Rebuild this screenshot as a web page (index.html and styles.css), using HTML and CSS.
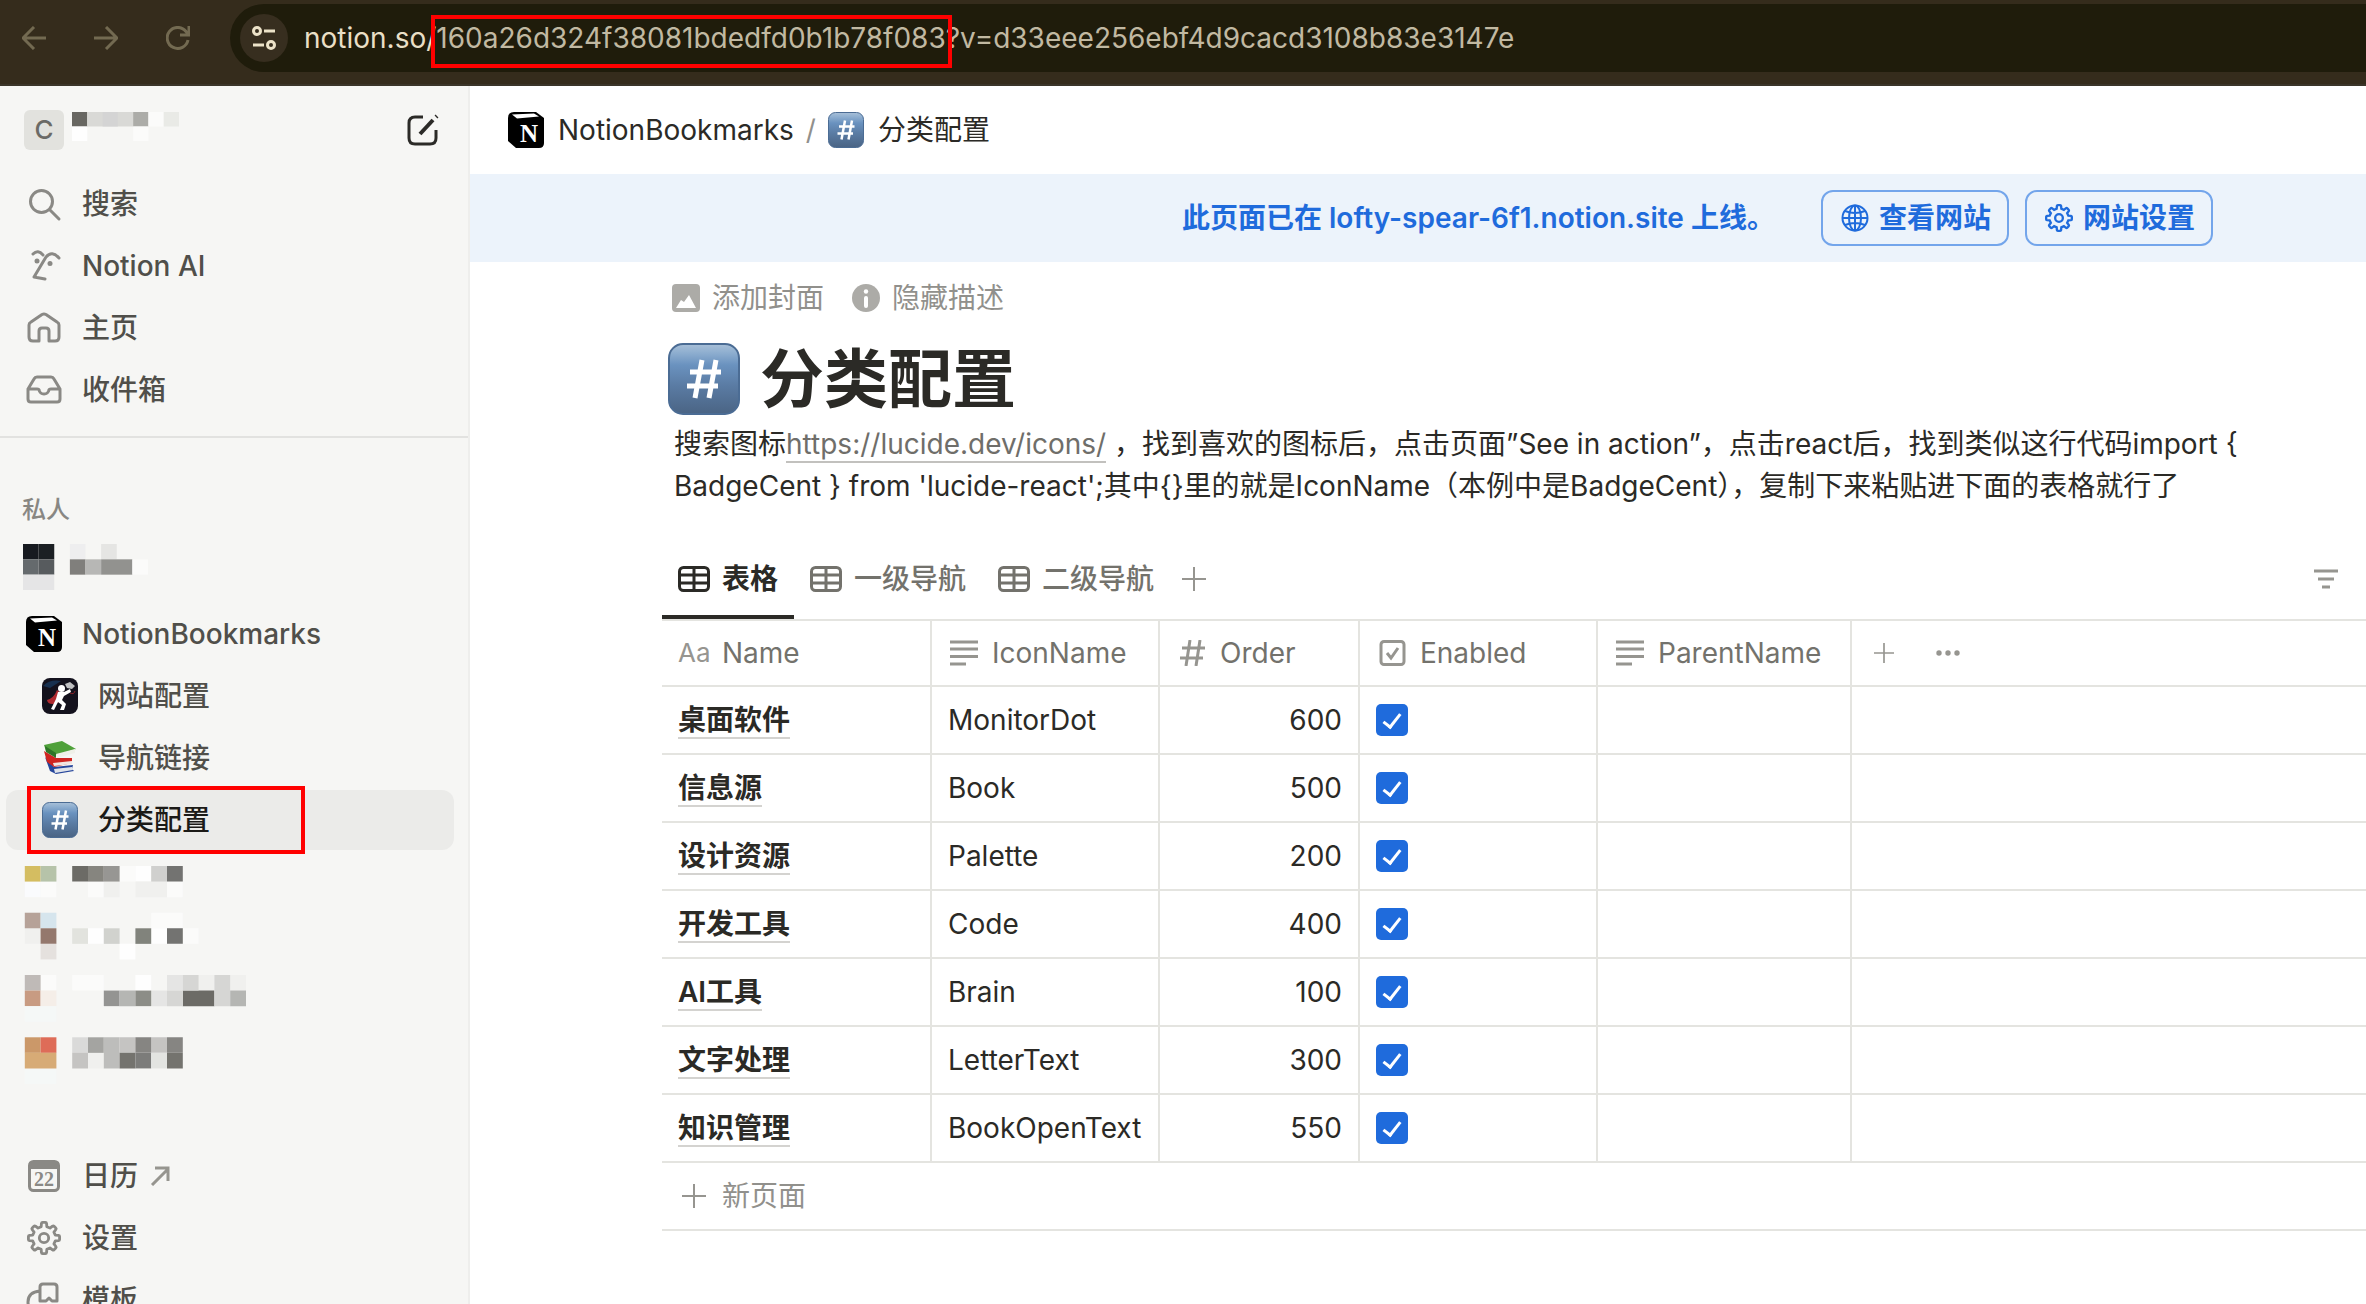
FILE: index.html
```html
<!DOCTYPE html>
<html lang="zh-CN">
<head>
<meta charset="utf-8">
<title>分类配置</title>
<link rel="stylesheet" href="styles.css">
</head>
<body>
<svg class="sprite" aria-hidden="true">
  <defs>
    <linearGradient id="keycap-fill" x1="0" y1="0" x2="0" y2="1">
      <stop offset="0" stop-color="#a9c0d8"/>
      <stop offset=".12" stop-color="#8fafd0"/>
      <stop offset=".3" stop-color="#6a92bf"/>
      <stop offset=".6" stop-color="#5a7ba3"/>
      <stop offset="1" stop-color="#4a6484"/>
    </linearGradient>
  </defs>
  <symbol id="i-gear" viewBox="-12 -12 24 24">
    <path d="M-2-8L-1.8-10.3Q-1.7-11-1-11H1Q1.7-11 1.8-10.3L2-8 4.2-7 6-8.4Q6.6-8.8 7.1-8.3L8.3-7.1Q8.8-6.6 8.4-6L7-4.2 8-2 10.3-1.8Q11-1.7 11-1V1Q11 1.7 10.3 1.8L8 2 7 4.2 8.4 6Q8.8 6.6 8.3 7.1L7.1 8.3Q6.6 8.8 6 8.4L4.2 7 2 8 1.8 10.3Q1.7 11 1 11H-1Q-1.7 11-1.8 10.3L-2 8-4.2 7-6 8.4Q-6.6 8.8-7.1 8.3L-8.3 7.1Q-8.8 6.6-8.4 6L-7 4.2-8 2-10.3 1.8Q-11 1.7-11 1V-1Q-11-1.7-10.3-1.8L-8-2-7-4.2-8.4-6Q-8.8-6.6-8.3-7.1L-7.1-8.3Q-6.6-8.8-6-8.4L-4.2-7Z"/>
    <circle r="3.3"/>
  </symbol>
  <symbol id="i-table" viewBox="0 0 32 26">
    <rect x="1.5" y="1.5" width="29" height="23" rx="4"/>
    <path d="M1.5 9H30.5M1.5 17H30.5M16 1.5V24.5"/>
  </symbol>
  <symbol id="i-text" viewBox="0 0 32 26">
    <path d="M2 2H30M2 9H30M2 16.500H30M2 24H18"/>
  </symbol>
  <symbol id="i-plus" viewBox="0 0 24 24"><path d="M12 0V24M0 12H24"/></symbol>
  <symbol id="i-keycap" viewBox="0 0 72 72">
    <rect x="1" y="1" width="70" height="70" rx="14" fill="url(#keycap-fill)" stroke="#4b6c94" stroke-width="2"/>
    <path d="M34 17L27 55M48 17L41 55M22 29H53M19 43H50" fill="none" stroke="#fff" stroke-width="5"/>
  </symbol>
  <symbol id="i-notion" viewBox="0 0 36 36">
    <path d="M6 0H28L36 6V31Q36 36 31 36H8L0 29V6Q0 0 6 0Z" fill="#000"/>
    <path d="M4 2.500L26 1.500 31 4.500 9 6.500Z" fill="#fff"/>
    <text x="21" y="30" text-anchor="middle" font-family="Liberation Serif, serif" font-weight="700" font-size="25" fill="#fff">N</text>
  </symbol>
</svg>

<div class="app">
  <header class="toolbar">
    <nav class="toolbar-nav" aria-label="浏览器导航">
      <button class="tool" aria-label="后退"><svg width="24" height="24" viewBox="0 0 24 24"><path d="M24 12H2M12 1L1 12 12 23"/></svg></button>
      <button class="tool" aria-label="前进"><svg width="24" height="24" viewBox="0 0 24 24"><path d="M0 12H22M12 1L23 12 12 23"/></svg></button>
      <button class="tool" aria-label="重新加载"><svg width="24" height="24" viewBox="0 0 24 24"><path d="M22 14A10.500 10.500 0 1 1 20 5.500L23 9M23 0V9H14"/></svg></button>
    </nav>
    <div class="address">
      <button class="site-info" aria-label="网站信息"><svg width="24" height="24" viewBox="0 0 24 24"><circle cx="5" cy="5" r="3.500"/><path d="M12 5H23M1 19H12"/><circle cx="19" cy="19" r="3.500"/></svg></button>
      <div class="url"><span class="host">notion.so/</span><span class="page-id">160a26d324f38081bdedfd0b1b78f083</span><span>?v=d33eee256ebf4d9cacd3108b83e3147e</span></div>
    </div>
  </header>

  <div class="workspace">
    <aside class="sidebar">
      <div class="account">
        <span class="avatar">C</span>
        <svg class="mosaic-name" viewBox="0 0 7 2" preserveAspectRatio="none" aria-hidden="true">
          <path fill="#686762" d="M0 0h1v1H0z"/><path fill="#d9d9d6" d="M1 0h3v1H1z"/><path fill="#d4d4d4" d="M2 0h1v1H2z"/><path fill="#acaca8" d="M4 0h1v1H4z"/><path fill="#fbfbfa" d="M5 0h1v1H5zM4 1h1v1H4z"/><path fill="#e9eae6" d="M6 0h1v1H6z"/><path fill="#fefefe" d="M0 1h1v1H0z"/>
        </svg>
        <button class="compose" aria-label="新建页面"><svg width="34" height="34" viewBox="0 0 34 34"><path d="M17 4H9Q3 4 3 10V25Q3 31 9 31H24Q30 31 30 25V17"/><path d="M14 21L27 7" stroke-width="4"/><path d="M30 4L31 3" stroke-width="4"/></svg></button>
      </div>

      <nav class="menu" aria-label="主菜单">
        <a class="item" href="#"><svg class="icon" viewBox="0 0 36 36"><circle cx="15.500" cy="15.500" r="11"/><path d="M24 24L33 33"/></svg>搜索</a>
        <a class="item" href="#"><svg class="icon" viewBox="0 0 36 36"><path d="M7 6Q12 1 17 7M10 29H8L20 9Q26 2 33 10M8 29L19 31"/><circle class="dot" cx="11" cy="13" r="2.500"/><circle class="dot" cx="24" cy="15.500" r="2.500"/></svg>Notion AI</a>
        <a class="item" href="#"><svg class="icon" viewBox="0 0 36 36"><path d="M3 15Q3 13 5 12L16 4.500Q18 3.500 20 4.500L31 12Q33 13 33 15V27Q33 31 29 31H23V21Q23 18 20 18H16Q13 18 13 21V31H7Q3 31 3 27Z"/></svg>主页</a>
        <a class="item" href="#"><svg class="icon" viewBox="0 0 36 36"><path d="M2 17L8 7Q9 5 11 5H25Q27 5 28 7L34 17V27Q34 30 31 30H5Q2 30 2 27ZM2 17H11Q13 17 13 18 14 22 18 22T23 18Q23 17 25 17H34"/></svg>收件箱</a>
      </nav>

      <h2 class="section-label">私人</h2>
      <div class="hidden-page">
        <svg class="mosaic-page" viewBox="0 0 8 3" preserveAspectRatio="none" aria-hidden="true">
          <path fill="#171a20" d="M0 0h1v1H0z"/><path fill="#1b1f23" d="M1 0h1v1H1z"/><path fill="#656a6d" d="M0 1h1v1H0z"/><path fill="#575b5e" d="M1 1h1v1H1z"/><path fill="#e5e5e6" d="M0 2h2v1H0z"/>
          <path fill="#eeeeef" d="M3 0h1v1H3z"/><path fill="#e5e5e3" d="M5 0h1v1H5z"/><path fill="#807f7c" d="M3 1h1v1H3z"/><path fill="#b7b7b5" d="M4 1h1v1H4z"/><path fill="#92928f" d="M5 1h2v1H5z"/><path fill="#fbfbfa" d="M7 1h1v1H7z"/>
        </svg>
      </div>
      <nav class="menu" aria-label="私人页面">
        <a class="item" href="#"><svg class="icon" viewBox="0 0 36 36"><use href="#i-notion"/></svg>NotionBookmarks</a>
        <a class="item child" href="#"><svg class="picture" viewBox="0 0 36 36"><rect width="36" height="36" rx="8" fill="#14121d"/><path d="M1 8Q8 1 19 3L8 10Z" fill="#17304f"/><path d="M15 12Q12 20 5 22 6 28 16 25L19 15Z" fill="#b02a30"/><circle cx="19.500" cy="10.500" r="3.500" fill="#fff"/><path d="M16 14L22 14 28 11 29 14 22 18 20 22 24 26 22 32H18L20 27 16 24 12 32 9 31 14 21Z" fill="#fff"/><path d="M23 6L28 4 33 8 30 11 25 10Z" fill="#bfc0c2"/><path d="M28 15Q32 17 33 13" stroke="#8c2028" fill="none"/></svg>网站配置</a>
        <a class="item child" href="#"><svg class="picture" viewBox="0 0 36 36"><path d="M3 17L12 27 31 25 30 29 32 31 14 34 8 31Z" fill="#26469b"/><path d="M12 29L30 27 31 30 13 33Z" fill="#dfe3ea"/><path d="M2 11L14 18 30 18 30 23 12 27 5 22Z" fill="#cf2420"/><path d="M11 23L30 21 30 24 12 26Z" fill="#f1e5e1"/><path d="M2 5L20 1 34 9 15 15 4 11Z" fill="#4fa13a"/><path d="M14 14L33 9V13L15 18Z" fill="#eff0e8"/><path d="M3 6L14 13V18L4 12Z" fill="#2d7427"/></svg>导航链接</a>
        <a class="item child active" href="#" aria-current="page"><svg class="picture" viewBox="0 0 72 72"><use href="#i-keycap"/></svg>分类配置</a>
      </nav>
      <div class="hidden-pages">
        <svg class="mosaic-list" viewBox="0 0 15 14" preserveAspectRatio="none" aria-hidden="true">
          <path fill="#fbfbfa" d="M2 1h1v1H2zM7 0h1v1H7zM5 1h1v1H5zM10 1h1v1h-1zM9 3h2v1H9zM11 4h1v1h-1zM2 7h1v1H2zM4 7h2v1H4z"/>
          <path fill="#fefefe" d="M8 0h1v1H8zM5 4h1v1H5zM9 4h1v1H9zM7 5h1v1H7zM8 7h1v1H8z"/>
          <path fill="#fafbfd" d="M1 1h1v1H1z"/>
          <path fill="#f0f0ee" d="M6 1h1v1H6zM8 1h2v1H8zM1 4h1v1H1zM12 7h1v1h-1zM14 7h1v1h-1zM5 12h1v1H5z"/>
          <path fill="#d4bd61" d="M1 0h1v1H1z"/><path fill="#b6c3a9" d="M2 0h1v1H2z"/>
          <path fill="#6c6b66" d="M4 0h1v1H4zM11 8h2v1h-2z"/><path fill="#86857f" d="M5 0h1v1H5z"/><path fill="#979693" d="M6 0h1v1H6z"/><path fill="#d0d0ce" d="M9 0h1v1H9z"/><path fill="#737371" d="M10 0h1v1h-1zM10 4h1v1h-1z"/>
          <path fill="#b6a298" d="M1 3h1v1H1z"/><path fill="#d6e5ed" d="M2 3h1v1H2z"/><path fill="#94786d" d="M2 4h1v1H2z"/><path fill="#e5e1de" d="M2 5h1v1H2z"/>
          <path fill="#e2e3de" d="M4 4h1v1H4z"/><path fill="#d1d2ce" d="M6 4h1v1H6z"/><path fill="#81837c" d="M8 4h1v1H8z"/>
          <path fill="#bfbab7" d="M1 7h1v1H1z"/><path fill="#c89b82" d="M1 8h1v1H1z"/><path fill="#f5eee8" d="M2 8h1v1H2z"/><path fill="#f5f8f7" d="M1 9h2v1H1zM1 13h2v1H1z"/>
          <path fill="#e5e5e4" d="M10 7h1v1h-1zM9 8h1v1H9z"/><path fill="#d6d6d4" d="M11 7h1v1h-1zM13 7h1v1h-1zM10 8h1v1h-1zM13 8h1v1h-1z"/>
          <path fill="#949492" d="M6 8h1v1H6z"/><path fill="#b5b6b3" d="M7 8h1v1H7zM14 8h1v1h-1z"/><path fill="#8c8d87" d="M8 8h1v1H8z"/>
          <path fill="#cb9869" d="M1 11h1v1H1z"/><path fill="#de6c58" d="M2 11h1v1H2z"/><path fill="#d7ab76" d="M1 12h2v1H1z"/>
          <path fill="#dadad9" d="M4 11h1v1H4z"/><path fill="#a4a4a1" d="M5 11h1v1H5z"/><path fill="#bdbdbb" d="M6 11h1v1H6zM6 12h1v1H6z"/><path fill="#c5c4c2" d="M7 11h1v1H7zM9 11h1v1H9zM4 12h1v1H4z"/><path fill="#868582" d="M8 11h1v1H8zM10 11h1v1h-1z"/><path fill="#74736e" d="M7 12h1v1H7zM10 12h1v1h-1z"/><path fill="#7c7c7a" d="M8 12h1v1H8z"/><path fill="#e3e4e1" d="M9 12h1v1H9z"/>
        </svg>
      </div>
      <nav class="menu" aria-label="工具">
        <a class="item" href="#"><svg class="icon" viewBox="0 0 36 36"><rect x="3.500" y="3.500" width="29" height="29" rx="4"/><path class="dot" d="M3 4H33V11H3Z"/><text class="day" x="18" y="28" text-anchor="middle">22</text></svg>日历<svg class="external" width="20" height="20" viewBox="0 0 20 20"><path d="M2 19L18 3M5 2H18V15"/></svg></a>
        <a class="item" href="#"><svg class="icon gear" viewBox="0 0 36 36"><use href="#i-gear" x="1" y="1" width="34" height="34"/></svg>设置</a>
        <a class="item" href="#"><svg class="icon" viewBox="0 0 36 36"><path d="M17 2H28Q31 2 31 5V19H26L23 16 20 19H14V5Q14 2 17 2ZM14 9Q2 10 2 20T13 31H31"/></svg>模板</a>
      </nav>
    </aside>

    <main class="main">
      <nav class="crumbs" aria-label="路径">
        <a class="crumb" href="#"><svg width="36" height="36"><use href="#i-notion"/></svg>NotionBookmarks</a>
        <span class="slash">/</span>
        <a class="crumb" href="#"><svg width="36" height="36"><use href="#i-keycap"/></svg>分类配置</a>
      </nav>

      <div class="banner">
        <span class="banner-text">此页面已在 lofty-spear-6f1.notion.site 上线。</span>
        <button class="site-button"><svg width="28" height="28" viewBox="0 0 28 28"><circle cx="14" cy="14" r="12.500"/><ellipse cx="14" cy="14" rx="6" ry="12.500"/><path d="M14 1.500V26.500M1.500 14H26.500M4 7Q14 11 24 7M4 21Q14 17 24 21"/></svg>查看网站</button>
        <button class="site-button"><svg width="28" height="28"><use href="#i-gear"/></svg>网站设置</button>
      </div>

      <div class="content">
        <div class="page-actions">
          <button class="page-action"><svg width="28" height="28" viewBox="0 0 28 28"><rect width="28" height="28" rx="4" fill="#acaba7"/><path d="M4 24L9 16 12 18 17 11 24 24Z" fill="#fff"/></svg>添加封面</button>
          <button class="page-action"><svg width="28" height="28" viewBox="0 0 28 28"><circle cx="14" cy="14" r="14" fill="#acaba7"/><circle cx="14" cy="7.500" r="2.200" fill="#fff"/><path d="M14 14V22" stroke="#fff" stroke-width="4" stroke-linecap="round"/></svg>隐藏描述</button>
        </div>
        <div class="title-row">
          <svg width="72" height="72"><use href="#i-keycap"/></svg>
          <h1 class="title">分类配置</h1>
        </div>
        <p class="description">搜索图标<a class="doc-link" href="https://lucide.dev/icons/">https://lucide.dev/icons/</a> ，找到喜欢的图标后，点击页面”See in action”，点击react后，找到类似这行代码import { BadgeCent } from 'lucide-react';其中{}里的就是IconName（本例中是BadgeCent），复制下来粘贴进下面的表格就行了</p>

        <div class="views">
          <button class="view current"><svg width="32" height="26"><use href="#i-table"/></svg>表格</button>
          <button class="view"><svg width="32" height="26"><use href="#i-table"/></svg>一级导航</button>
          <button class="view"><svg width="32" height="26"><use href="#i-table"/></svg>二级导航</button>
          <button class="add-view" aria-label="添加视图"><svg width="24" height="24"><use href="#i-plus"/></svg></button>
          <button class="filter" aria-label="筛选"><svg width="24" height="20" viewBox="0 0 24 20"><path d="M0 2H24M4 10H20M8 18H16"/></svg></button>
        </div>

        <table class="grid">
          <colgroup><col class="c-name"><col class="c-icon"><col class="c-order"><col class="c-enabled"><col class="c-parent"><col></colgroup>
          <thead>
            <tr>
              <th scope="col"><span class="head"><span class="aa">Aa</span>Name</span></th>
              <th scope="col"><span class="head"><svg width="32" height="26"><use href="#i-text"/></svg>IconName</span></th>
              <th scope="col"><span class="head"><svg width="32" height="26" viewBox="0 0 32 26"><path d="M14 0L10 26M24 0L20 26M6 8H29M4 18H27"/></svg>Order</span></th>
              <th scope="col"><span class="head"><svg width="32" height="26" viewBox="0 0 32 26"><rect x="5" y="1.500" width="23" height="23" rx="3"/><path d="M11 13L15 18 22 8"/></svg>Enabled</span></th>
              <th scope="col"><span class="head"><svg width="32" height="26"><use href="#i-text"/></svg>ParentName</span></th>
              <th class="tools"><span class="tool-pair"><button aria-label="添加属性"><svg width="20" height="20"><use href="#i-plus"/></svg></button><button aria-label="更多"><svg width="24" height="6" viewBox="0 0 24 6"><circle class="dot" cx="3" cy="3" r="2.700"/><circle class="dot" cx="12" cy="3" r="2.700"/><circle class="dot" cx="21" cy="3" r="2.700"/></svg></button></span></th>
            </tr>
          </thead>
          <tbody>
            <tr><td><a class="name" href="#">桌面软件</a></td><td>MonitorDot</td><td class="num">600</td><td><input class="check" type="checkbox" checked aria-label="桌面软件 Enabled"></td><td></td><td></td></tr>
            <tr><td><a class="name" href="#">信息源</a></td><td>Book</td><td class="num">500</td><td><input class="check" type="checkbox" checked aria-label="信息源 Enabled"></td><td></td><td></td></tr>
            <tr><td><a class="name" href="#">设计资源</a></td><td>Palette</td><td class="num">200</td><td><input class="check" type="checkbox" checked aria-label="设计资源 Enabled"></td><td></td><td></td></tr>
            <tr><td><a class="name" href="#">开发工具</a></td><td>Code</td><td class="num">400</td><td><input class="check" type="checkbox" checked aria-label="开发工具 Enabled"></td><td></td><td></td></tr>
            <tr><td><a class="name" href="#">AI工具</a></td><td>Brain</td><td class="num">100</td><td><input class="check" type="checkbox" checked aria-label="AI工具 Enabled"></td><td></td><td></td></tr>
            <tr><td><a class="name" href="#">文字处理</a></td><td>LetterText</td><td class="num">300</td><td><input class="check" type="checkbox" checked aria-label="文字处理 Enabled"></td><td></td><td></td></tr>
            <tr><td><a class="name" href="#">知识管理</a></td><td>BookOpenText</td><td class="num">550</td><td><input class="check" type="checkbox" checked aria-label="知识管理 Enabled"></td><td></td><td></td></tr>
          </tbody>
        </table>
        <button class="new-row"><svg width="24" height="24"><use href="#i-plus"/></svg>新页面</button>
      </div>
    </main>
  </div>
</div>
</body>
</html>
```

FILE: styles.css
```css
* { box-sizing: border-box; }

body {
  margin: 0;
  font-family: Inter, "Noto Sans CJK SC", sans-serif;
  font-size: 28px;
  line-height: 42px;
  color: #2b2a26;
  background: #fff;
}

a { color: inherit; text-decoration: none; }

button {
  margin: 0;
  padding: 0;
  border: 0;
  background: none;
  font: inherit;
  color: inherit;
}

svg { display: block; flex: none; }
.sprite { position: absolute; width: 0; height: 0; }

.app {
  display: flex;
  flex-direction: column;
  height: 100vh;
  overflow: hidden;
}

/* browser toolbar */
.toolbar {
  display: flex;
  flex: none;
  height: 86px;
  padding: 4px 0 12px 22px;
  background: #352c1c;
  border-bottom: 2px solid #3b3529;
}

.toolbar-nav {
  display: flex;
  align-items: center;
  gap: 48px;
  width: 208px;
}

.tool svg {
  fill: none;
  stroke: #736a51;
  stroke-width: 3;
}

.address {
  display: flex;
  flex: 1;
  align-items: center;
  gap: 16px;
  padding-left: 10px;
  border-radius: 34px 0 0 34px;
  background: #1f1c0b;
}

.site-info {
  display: grid;
  place-items: center;
  width: 48px;
  height: 48px;
  border-radius: 50%;
  background: #372e1f;
}

.site-info svg {
  fill: none;
  stroke: #ece2c8;
  stroke-width: 3;
}

.url { color: #c1b9a2; white-space: nowrap; }
.host { color: #e9dfc6; }
.page-id { position: relative; }

.page-id::after {
  content: "";
  position: absolute;
  inset: -6px -6px -13px -5px;
  border: 4px solid #f00;
}

/* sidebar */
.workspace { display: flex; flex: 1; min-height: 0; }

.sidebar {
  flex: none;
  width: 470px;
  overflow: hidden;
  background: #f6f6f4;
  border-right: 2px solid #eeeeec;
  color: #504f4a;
  font-weight: 500;
}

.account {
  display: flex;
  align-items: center;
  gap: 8px;
  height: 88px;
  padding: 0 28px 0 24px;
}

.avatar {
  width: 40px;
  height: 40px;
  border-radius: 6px;
  background: #e2e2de;
  color: #6b6a66;
  font-size: 26px;
  line-height: 40px;
  text-align: center;
}

.mosaic-name { width: 107px; height: 29px; }
.account .mosaic-name { align-self: flex-start; margin-top: 26px; }
.compose { margin-left: auto; }

.compose svg {
  fill: none;
  stroke: #2b2a27;
  stroke-width: 3;
}

.menu {
  display: flex;
  flex-direction: column;
  gap: 2px;
  padding: 0 14px 0 6px;
}

.account + .menu {
  padding-bottom: 16px;
  border-bottom: 2px solid #e2e2e0;
}

.item {
  position: relative;
  display: flex;
  align-items: center;
  gap: 20px;
  height: 60px;
  padding-left: 20px;
  border-radius: 12px;
}

.icon, .picture { width: 36px; height: 36px; }

.icon {
  fill: none;
  stroke: #8a8985;
  stroke-width: 3;
  stroke-linecap: round;
  stroke-linejoin: round;
}

.icon use[href="#i-notion"] { stroke: none; }
.icon.gear { stroke-width: 2; }
.icon .dot { fill: #8a8985; stroke: none; }

.day {
  fill: #8a8985;
  stroke: none;
  font: 700 20px "Liberation Serif", serif;
}

.external {
  margin-left: -8px;
  fill: none;
  stroke: #96958f;
  stroke-width: 3;
}

.child { padding-left: 36px; }
.active { background: #ebebe9; color: #1b1a17; }

.active::after {
  content: "";
  position: absolute;
  top: -4px;
  bottom: -4px;
  left: 21px;
  width: 270px;
  border: 4px solid #f00;
}

.section-label {
  margin: 46px 0 0;
  padding-left: 22px;
  color: #888783;
  font-size: 24px;
  font-weight: 500;
  line-height: 52px;
}

.hidden-page { height: 68px; padding: 8px 0 0 23px; }
.mosaic-page { width: 125px; height: 46px; }
.hidden-pages { height: 296px; padding: 16px 0 0 9px; }
.mosaic-list { width: 237px; height: 218px; }

/* main column */
.main { flex: 1; min-width: 0; }

.crumbs {
  display: flex;
  align-items: center;
  gap: 12px;
  height: 88px;
  padding-left: 38px;
}

.crumb { display: flex; align-items: center; gap: 14px; }
.slash { color: #91908c; }

.banner {
  display: flex;
  align-items: center;
  justify-content: flex-end;
  gap: 16px;
  height: 88px;
  padding-right: 153px;
  background: #ecf3fb;
  color: #1f6bdc;
  font-weight: 600;
}

.banner-text { margin-right: 30px; }

.site-button {
  display: flex;
  align-items: center;
  gap: 10px;
  height: 56px;
  padding: 0 16px 0 18px;
  border: 2px solid #73a5eb;
  border-radius: 12px;
}

.site-button svg {
  fill: none;
  stroke: #1f6bdc;
  stroke-width: 2;
}

.content { padding: 12px 0 0 192px; }

.page-actions {
  display: flex;
  gap: 28px;
  height: 48px;
  padding-left: 10px;
}

.page-action {
  display: flex;
  align-items: center;
  gap: 12px;
  color: #91908c;
}

.title-row {
  display: flex;
  align-items: center;
  gap: 20px;
  height: 101px;
  padding: 12px 0 0 6px;
}

.title {
  margin: 0;
  font-size: 64px;
  font-weight: 700;
  line-height: 72px;
}

.description { margin: 0; padding: 0 100px 0 12px; }

.doc-link {
  color: #6f6e6a;
  border-bottom: 2px solid #c2c1be;
}

/* view tabs */
.views {
  display: flex;
  height: 78px;
  margin-top: 36px;
  border-bottom: 2px solid #e4e4e0;
}

.view {
  display: flex;
  align-items: center;
  gap: 12px;
  padding: 0 16px;
  border-bottom: 4px solid transparent;
  color: #73726c;
  font-weight: 500;
}

.view svg {
  fill: none;
  stroke: #73726c;
  stroke-width: 3;
}

.current { border-color: #2b2a26; color: #2b2a26; font-weight: 600; }
.current svg { stroke: #2b2a26; }

.add-view { padding: 0 12px 4px; }
.filter { margin-left: auto; padding: 0 28px 4px 0; }

.add-view svg, .filter svg, .tools svg, .new-row svg, .head svg {
  fill: none;
  stroke: #969590;
  stroke-width: 2;
}

.filter svg, .head svg { stroke-width: 3; }

/* data table */
.grid {
  width: 100%;
  table-layout: fixed;
  border-spacing: 0;
}

.c-name { width: 270px; }
.c-icon { width: 228px; }
.c-order { width: 200px; }
.c-enabled { width: 238px; }
.c-parent { width: 254px; }

.grid th, .grid td {
  padding: 0 14px 0 16px;
  border-right: 2px solid #e4e4e0;
  border-bottom: 2px solid #e4e4e0;
  text-align: left;
  font-weight: 400;
}

.grid th { height: 66px; color: #73726c; }
.grid td { height: 68px; }
.grid th:last-child, .grid td:last-child { border-right: 0; }
.grid .num { padding-right: 16px; text-align: right; }
.grid .tools { padding: 0; }

.head { display: flex; align-items: center; gap: 12px; }
.aa { width: 32px; color: #969590; font-size: 26px; }

.tool-pair { display: flex; }
.tool-pair button { display: grid; place-items: center; width: 64px; height: 64px; }
.tools .dot { fill: #969590; stroke: none; }

.name { font-weight: 600; border-bottom: 2px solid #d4d3d0; }

.check {
  display: block;
  appearance: none;
  width: 32px;
  height: 32px;
  margin: 0;
  border-radius: 5px;
  background: #1f6bdc;
}

.check::after {
  content: "";
  display: block;
  width: 7px;
  height: 15px;
  margin: 0 0 0 11px;
  border: solid #fff;
  border-width: 0 3px 3px 0;
  transform: translateY(6px) rotate(38deg);
}

.new-row {
  display: flex;
  align-items: center;
  gap: 16px;
  width: 100%;
  height: 68px;
  padding-left: 20px;
  border-bottom: 2px solid #e4e4e0;
  color: #91908c;
}
```
